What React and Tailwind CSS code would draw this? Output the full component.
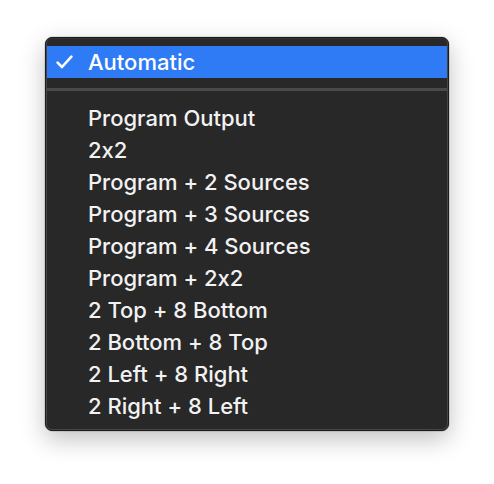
export default function App() {
  const items = [
    "Program Output",
    "2x2",
    "Program + 2 Sources",
    "Program + 3 Sources",
    "Program + 4 Sources",
    "Program + 2x2",
    "2 Top + 8 Bottom",
    "2 Bottom + 8 Top",
    "2 Left + 8 Right",
    "2 Right + 8 Left",
  ];
  return (
    <div className="w-[494px] h-[484px] bg-white pl-[45px] pt-[37px] [font-feature-settings:'calt'_0]" style={{ fontFamily: "Inter, 'Liberation Sans', sans-serif" }}>
      <div className="w-[404px] h-[394px] rounded-[7px] bg-[#282828] border border-[#1c1c1c] shadow-[0_8px_24px_rgba(0,0,0,0.25),0_0_0_0.5px_rgba(0,0,0,0.2)] overflow-hidden">
        <div className="h-full rounded-[6px] border border-[#454545] border-t-[#303030] py-[7px]">
          <div className="h-8 bg-[#2f7bf5] flex items-center text-[#ffffff] text-[22px] font-medium">
            <div className="w-[41px] pl-[9px] flex items-center">
              <svg width="17" height="14" viewBox="0 0 17 14" fill="none">
                <path d="M1.6 7.6 L6 12 L15.4 1.6" stroke="white" strokeWidth="2.6" strokeLinecap="round" strokeLinejoin="round" />
              </svg>
            </div>
            <span className="leading-none">Automatic</span>
          </div>
          <div className="h-6 flex items-center">
            <div className="w-full h-[3px] bg-[#4a4a4a] -mt-[2px]" />
          </div>
          {items.map((t) => (
            <div key={t} className="h-8 flex items-center pl-[41px] text-[22px] font-medium text-[#f2f2f2] leading-none">
              {t}
            </div>
          ))}
        </div>
      </div>
    </div>
  );
}
